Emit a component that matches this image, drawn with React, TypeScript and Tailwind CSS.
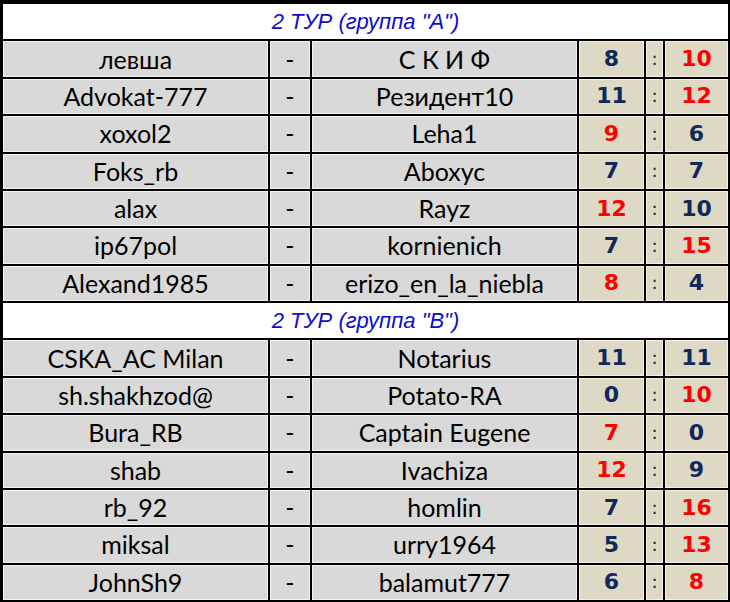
import React from "react";

type Match = { home: string; away: string; hs: number; as: number };

const groupA: Match[] = [
  { home: "левша", away: "С К И Ф", hs: 8, as: 10 },
  { home: "Advokat-777", away: "Резидент10", hs: 11, as: 12 },
  { home: "xoxol2", away: "Leha1", hs: 9, as: 6 },
  { home: "Foks_rb", away: "Aboxyc", hs: 7, as: 7 },
  { home: "alax", away: "Rayz", hs: 12, as: 10 },
  { home: "ip67pol", away: "kornienich", hs: 7, as: 15 },
  { home: "Alexand1985", away: "erizo_en_la_niebla", hs: 8, as: 4 },
];

const groupB: Match[] = [
  { home: "CSKA_AC Milan", away: "Notarius", hs: 11, as: 11 },
  { home: "sh.shakhzod@", away: "Potato-RA", hs: 0, as: 10 },
  { home: "Bura_RB", away: "Captain Eugene", hs: 7, as: 0 },
  { home: "shab", away: "Ivachiza", hs: 12, as: 9 },
  { home: "rb_92", away: "homlin", hs: 7, as: 16 },
  { home: "miksal", away: "urry1964", hs: 5, as: 13 },
  { home: "JohnSh9", away: "balamut777", hs: 6, as: 8 },
];

const nameCell =
  "bg-[#d9d9d9] border border-[#f4f4f4] flex items-center justify-center text-[25px] text-black font-['Lato','Liberation_Sans',sans-serif] leading-none";
const scoreCell =
  "bg-[#ddd9c4] border border-[#f4f2e8] flex items-center justify-center text-[22px] font-bold font-['DejaVu_Sans','Liberation_Sans',sans-serif] leading-none";

// the higher score is printed in red
function scoreColor(mine: number, other: number) {
  return mine > other ? "text-[#ff0000]" : "text-[#10285a]";
}

function Header({ label }: { label: string }) {
  return (
    <div className="col-span-6 bg-white flex items-center justify-center text-[22px] italic text-[#0c0cd0] font-['Liberation_Sans',sans-serif] leading-none">
      {label}
    </div>
  );
}

function Row({ m }: { m: Match }) {
  return (
    <>
      <div className={nameCell}>{m.home}</div>
      <div className={nameCell}>-</div>
      <div className={nameCell}>{m.away}</div>
      <div className={`${scoreCell} ${scoreColor(m.hs, m.as)}`}>{m.hs}</div>
      <div className="bg-[#ddd9c4] border border-[#f4f2e8] flex items-center justify-center text-[18px] font-['DejaVu_Sans',sans-serif] text-[#222] leading-none">
        :
      </div>
      <div className={`${scoreCell} ${scoreColor(m.as, m.hs)}`}>{m.as}</div>
    </>
  );
}

export default function App() {
  return (
    <div className="w-[730px] h-[602px] bg-black pt-[4px] pl-[3px] pr-[2px] pb-[2px]">
      <div className="grid h-full grid-cols-[265px_40px_265px_65px_17px_63px] grid-rows-[repeat(16,1fr)] gap-[2px]">
        <Header label={'2 ТУР (группа "А")'} />
        {groupA.map((m) => (
          <Row key={m.home} m={m} />
        ))}
        <Header label={'2 ТУР (группа "В")'} />
        {groupB.map((m) => (
          <Row key={m.home} m={m} />
        ))}
      </div>
    </div>
  );
}
